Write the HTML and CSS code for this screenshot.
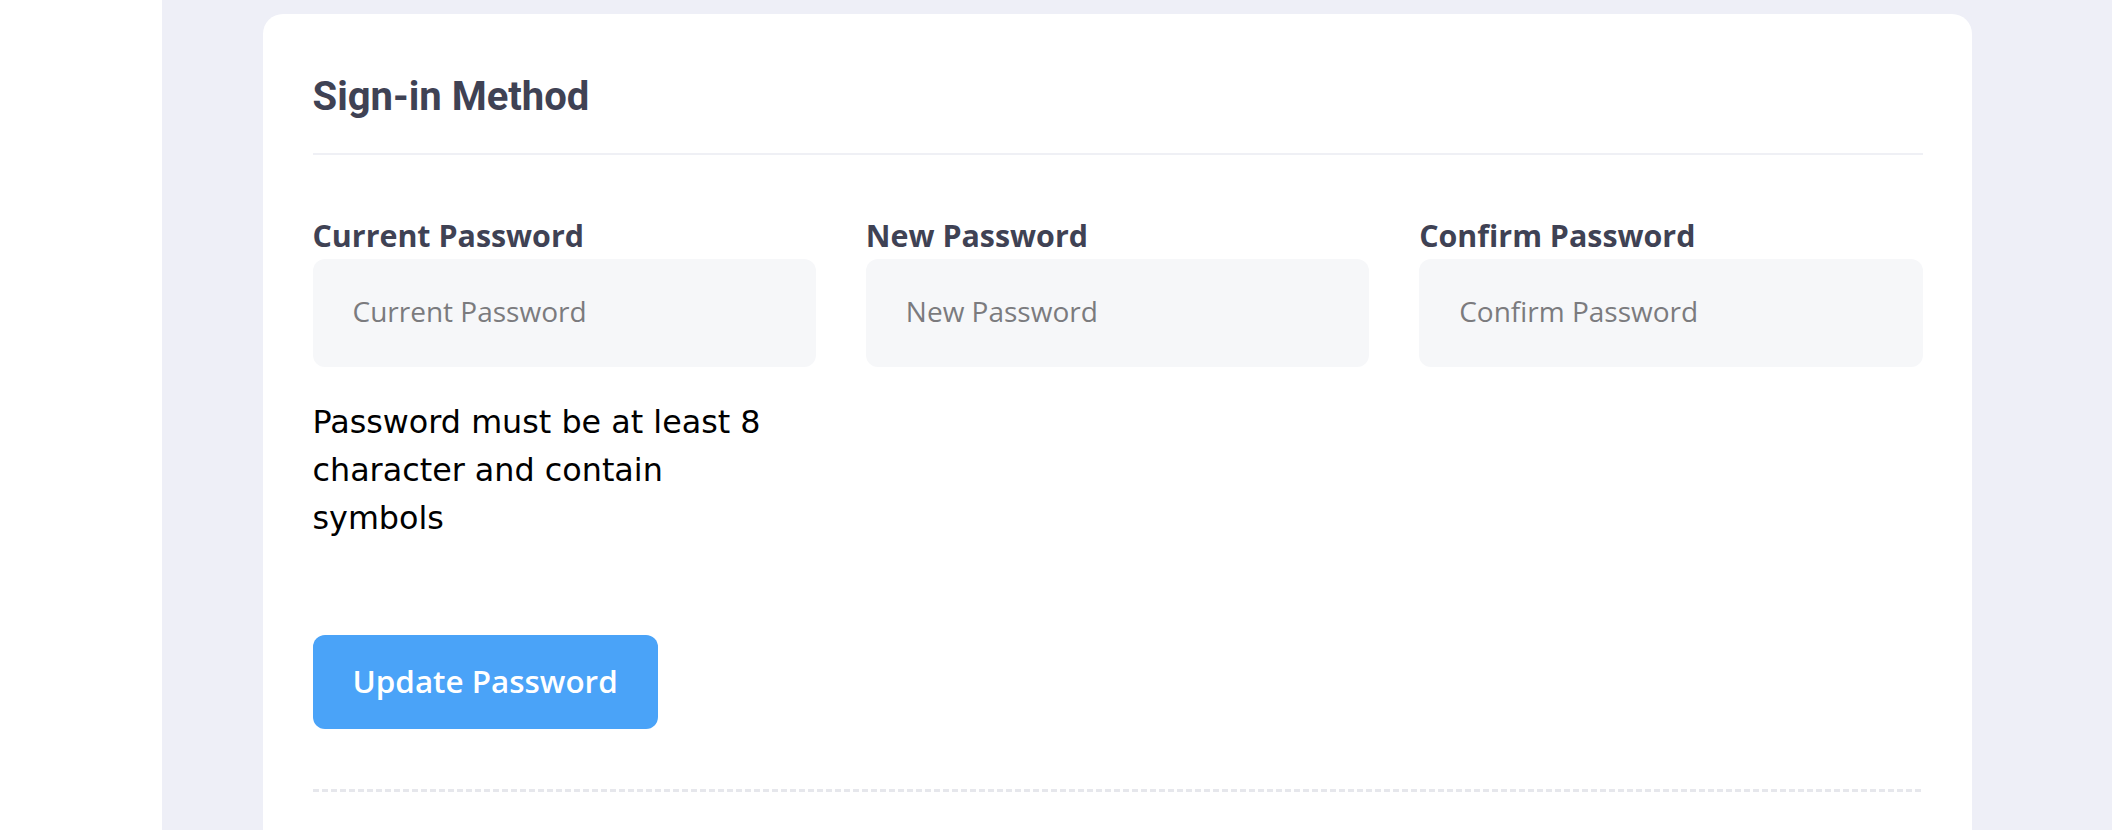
FILE: index.html
```html
<!DOCTYPE html>
<html lang="en">
<head>
<meta charset="utf-8">
<title>Sign-in Method</title>
<link rel="stylesheet" href="styles.css">
</head>
<body>
<div class="layout">
  <aside class="sidebar"></aside>
  <main class="content">
    <section class="card">
      <div class="card-header">
        <h2 class="card-title">Sign-in Method</h2>
      </div>
      <form class="card-body">
        <div class="fields">
          <div class="field">
            <label class="field-label" for="current">Current Password</label>
            <input class="field-input" id="current" type="password" placeholder="Current Password">
            <p class="hint">Password must be at least 8 character and contain symbols</p>
          </div>
          <div class="field">
            <label class="field-label" for="new">New Password</label>
            <input class="field-input" id="new" type="password" placeholder="New Password">
          </div>
          <div class="field">
            <label class="field-label" for="confirm">Confirm Password</label>
            <input class="field-input" id="confirm" type="password" placeholder="Confirm Password">
          </div>
        </div>
        <button class="btn-primary" type="button">Update Password</button>
        <div class="dashed-sep"></div>
      </form>
    </section>
  </main>
</div>
</body>
</html>
```
FILE: styles.css
```css
html, body {
  margin: 0;
  padding: 0;
  height: 100%;
  overflow: hidden;
}

body {
  font-family: "Open Sans", "DejaVu Sans", sans-serif;
  background: #ffffff;
}

.layout {
  display: flex;
  min-height: 100vh;
}

.sidebar {
  width: 162px;
  flex: 0 0 162px;
  background: #ffffff;
}

.content {
  flex: 1;
  background: #eeeff7;
  padding: 14px 140px 0 101px;
}

.card {
  background: #ffffff;
  border-radius: 20px;
  padding: 0 49.5px;
}

.card-header {
  padding: 59px 0 32px;
  border-bottom: 2px solid #eff0f5;
}

.card-title {
  margin: 0;
  font-family: Roboto, "Liberation Sans", sans-serif;
  font-weight: 700;
  font-size: 40px;
  line-height: 48px;
  color: #3f4254;
}

.card-body {
  padding: 60px 0 80px;
}

.fields {
  display: grid;
  grid-template-columns: repeat(3, 1fr);
  column-gap: 50px;
  align-items: start;
}

.field {
  display: flex;
  flex-direction: column;
}

.field-label {
  display: block;
  font-family: "Open Sans", sans-serif;
  font-weight: 700;
  font-size: 30.4px;
  line-height: 42px;
  margin-bottom: 2px;
  color: #3f4254;
}

.field-input {
  box-sizing: border-box;
  height: 108px;
  width: 100%;
  border: none;
  outline: none;
  border-radius: 12px;
  background: #f6f7f9;
  padding: 0 40px 4px;
  font-family: "Open Sans", sans-serif;
  font-size: 28px;
  color: #3f4254;
}

.field-input::placeholder {
  color: #7b7b7e;
  opacity: 1;
}

.hint {
  margin: 31px 0 0;
  max-width: 456px;
  font-family: "DejaVu Sans", sans-serif;
  font-size: 31.8px;
  line-height: 48px;
  color: #000000;
}

.btn-primary {
  box-sizing: border-box;
  display: flex;
  align-items: center;
  margin-top: 93px;
  height: 94px;
  padding: 0 40px 3px;
  border: none;
  border-radius: 12px;
  background: #4aa3f8;
  color: #ffffff;
  font-family: "Open Sans", sans-serif;
  font-weight: 600;
  font-size: 31.4px;
  cursor: pointer;
}

.dashed-sep {
  margin-top: 60px;
  height: 3px;
  background: repeating-linear-gradient(to right, #e6e7ec 0, #e6e7ec 6px, transparent 6px, transparent 9px);
}
```
